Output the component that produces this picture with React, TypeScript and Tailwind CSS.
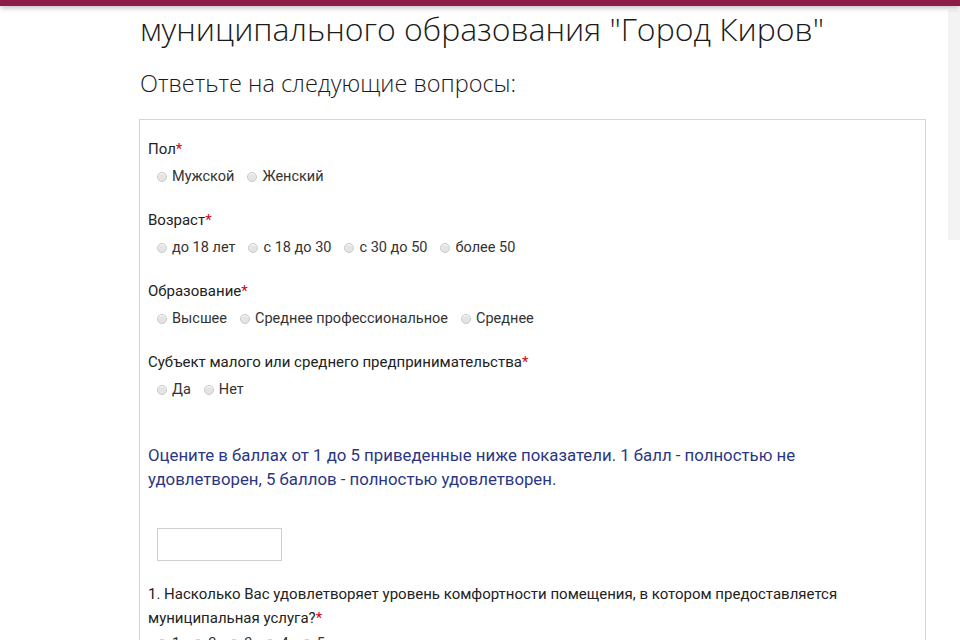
const sans = { fontFamily: "Roboto, 'Liberation Sans', sans-serif" };

function Radio({ label }: { label: string }) {
  return (
    <label className="flex items-center gap-[5px] text-[14.5px] leading-[20px] text-[#333]">
      <span className="h-[10px] w-[10px] rounded-full border border-[#c9c9c9] bg-[#e4e4e4] shadow-[inset_0_1px_1px_rgba(255,255,255,0.9)]" />
      {label}
    </label>
  );
}

function Question({ title, options }: { title: string; options: string[] }) {
  return (
    <div className="mb-[23px]">
      <div className="text-[15px] leading-[20px] text-[#222]">
        {title}
        <span className="text-[#d0021b]">*</span>
      </div>
      <div className="mt-[8px] flex items-center gap-[13px] pl-[9px]">
        {options.map((o) => (
          <Radio key={o} label={o} />
        ))}
      </div>
    </div>
  );
}

export default function App() {
  return (
    <div className="min-h-[640px] overflow-hidden bg-white" style={sans}>
      <div className="relative z-10 h-[6px] bg-[#8c1d47] shadow-[0_2px_5px_rgba(0,0,0,0.25)]" />

      <div className="flex">
        <main className="ml-[139px] w-[787px]">
          <h1
            className="mt-[4px] pl-[1px] text-[32px] font-light leading-[38px] text-[#1a1a1a]"
            style={{ fontFamily: "'Open Sans', sans-serif" }}
          >
            муниципального образования "Город Киров"
          </h1>

          <h2
            className="mt-[20px] pl-[1px] text-[23.5px] font-light leading-[30px] text-[#1a1a1a]"
            style={{ fontFamily: "'Open Sans', sans-serif" }}
          >
            Ответьте на следующие вопросы:
          </h2>

          <section className="mt-[21px] border border-[#d6d6d6] px-[8px] pt-[19px] pb-[40px]">
            <Question title="Пол" options={["Мужской", "Женский"]} />
            <Question
              title="Возраст"
              options={["до 18 лет", "с 18 до 30", "с 30 до 50", "более 50"]}
            />
            <Question
              title="Образование"
              options={["Высшее", "Среднее профессиональное", "Среднее"]}
            />
            <Question
              title="Субъект малого или среднего предпринимательства"
              options={["Да", "Нет"]}
            />

            <p className="mt-[43px] max-w-[720px] text-[16.8px] leading-[24px] text-[#2b3682]">
              Оцените в баллах от 1 до 5 приведенные ниже показатели. 1 балл - полностью не
              удовлетворен, 5 баллов - полностью удовлетворен.
            </p>

            <input
              type="text"
              className="ml-[9px] mt-[37px] block h-[33px] w-[125px] border border-[#cfcfcf] bg-white outline-none"
            />

            <div className="mt-[21px] text-[15px] leading-[24px] text-[#222]">
              1. Насколько Вас удовлетворяет уровень комфортности помещения, в котором
              предоставляется муниципальная услуга?
              <span className="text-[#d0021b]">*</span>
            </div>
            <div className="mt-[4px] flex items-center gap-[13px] pl-[9px]">
              {["1", "2", "3", "4", "5"].map((o) => (
                <Radio key={o} label={o} />
              ))}
            </div>
          </section>
        </main>

        <aside className="ml-auto mt-[4px] h-[230px] w-[12px] bg-[#f3f3f3]" />
      </div>
    </div>
  );
}
